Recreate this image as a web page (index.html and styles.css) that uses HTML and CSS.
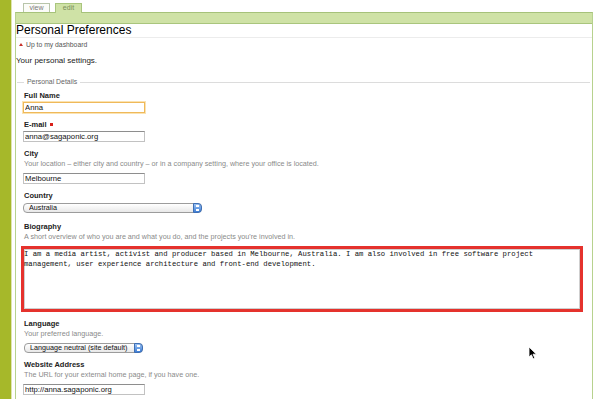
FILE: index.html
```html
<!DOCTYPE html>
<html lang="en">
<head>
    <meta charset="UTF-8">
    <meta name="viewport" content="width=device-width, initial-scale=1.0">
    <title>Personal Preferences</title>
    <link rel="stylesheet" href="styles.css">
</head>
<body>

<div class="page">
    <div class="rail"></div>

    <div class="main">
        <ul class="tabs">
            <li class="tab">view</li>
            <li class="tab active">edit</li>
        </ul>

        <div class="panel">
            <div class="panelBar"></div>

            <h1 class="title">Personal Preferences</h1>
            <a class="upLink" href="#"><span class="upArrow"></span>Up to my dashboard</a>
            <p class="intro">Your personal settings.</p>

            <form action="#" id="prefsForm">
                <fieldset class="details">
                    <legend>Personal Details</legend>

                    <div class="field">
                        <label for="fullname">Full Name</label>
                        <input type="text" id="fullname" class="text focused" value="Anna">
                    </div>

                    <div class="field">
                        <label for="email">E-mail <span class="required"></span></label>
                        <input type="text" id="email" class="text" value="anna@sagaponic.org">
                    </div>

                    <div class="field">
                        <label for="city">City</label>
                        <p class="help">Your location – either city and country – or in a company setting, where your office is located.</p>
                        <input type="text" id="city" class="text" value="Melbourne">
                    </div>

                    <div class="field">
                        <label for="country">Country</label>
                        <span class="selectBox wide">
                            <select id="country"><option>Australia</option></select>
                        </span>
                    </div>

                    <div class="field bioField">
                        <label for="bio">Biography</label>
                        <p class="help">A short overview of who you are and what you do, and the projects you're involved in.</p>
                        <textarea id="bio" class="bio">I am a media artist, activist and producer based in Melbourne, Australia. I am also involved in free software project management, user experience architecture and front-end development.</textarea>
                    </div>

                    <div class="field">
                        <label for="language">Language</label>
                        <p class="help">Your preferred language.</p>
                        <span class="selectBox">
                            <select id="language"><option>Language neutral (site default)</option></select>
                        </span>
                    </div>

                    <div class="field">
                        <label for="website">Website Address</label>
                        <p class="help">The URL for your external home page, if you have one.</p>
                        <input type="text" id="website" class="text" value="http://anna.sagaponic.org">
                    </div>
                </fieldset>
            </form>
        </div>
    </div>

    <svg class="pointer" width="10" height="14" viewBox="0 0 10 14">
        <path d="M1 1 L1 11 L3.4 8.8 L5.2 12.8 L6.8 12.1 L5 8.2 L8.4 8.2 Z" fill="#000" stroke="#fff" stroke-width="0.8"/>
    </svg>
</div>

</body>
</html>
```

FILE: styles.css
```css
body {
    margin: 0;
    padding: 0;
    background-color: #fff;
    font-family: "Liberation Sans", Arial, sans-serif;
    color: #222;
}
.page {
    display: flex;
    height: 399px;
    overflow: hidden;
    position: relative;
}
.rail {
    width: 11px;
    flex: none;
    background-color: #a6b82a;
    border-right: 1px solid #dfe5b0;
}
.main {
    flex: 1;
    margin-left: 3px;
    margin-right: 7px;
    padding-top: 3px;
}

/* Tabs on top of the green bar */
.tabs {
    list-style: none;
    margin: 0 0 0 8px;
    padding: 0;
    display: flex;
    gap: 5px;
    height: 9px;
}
.tab {
    width: 27px;
    height: 9px;
    box-sizing: border-box;
    border: 1px solid #b8c5aa;
    border-bottom: none;
    background-color: #fbfcf8;
    color: #7a7a7a;
    font-size: 7px;
    line-height: 8px;
    text-align: center;
}
.tab.active {
    height: 10px;
    background-color: #cfe2a6;
    border-color: #a9c57d;
    color: #7b8f5c;
    position: relative;
    z-index: 1;
}

.panel {
    border: 1px solid #b7d28e;
    border-top-color: #a6c27a;
    border-bottom: none;
    height: 400px;
}
.panelBar {
    height: 10px;
    background-color: #cfe2a6;
    border-bottom: 1px solid #a9c57d;
}

.title {
    margin: 0;
    padding-bottom: 1px;
    font-size: 12px;
    line-height: 12px;
    font-weight: normal;
    color: #000;
    border-bottom: 1px solid #ececec;
}
.upLink {
    display: block;
    margin-top: 2px;
    padding-left: 3px;
    font-size: 6.8px;
    line-height: 10px;
    color: #555;
    text-decoration: none;
}
.upArrow {
    display: inline-block;
    width: 0;
    height: 0;
    border-left: 2px solid transparent;
    border-right: 2px solid transparent;
    border-bottom: 3px solid #c8312b;
    margin-right: 3px;
    vertical-align: 1px;
}
.intro {
    margin: 6px 0 0 0;
    font-size: 8px;
    line-height: 10px;
    color: #222;
}

/* Personal details */
.details {
    margin: 12px 2px 0 1px;
    padding: 5px 0 0 7px;
    border: none;
    border-top: 1px solid #dcdcdc;
    min-width: 0;
}
.details legend {
    padding: 0 3px;
    font-size: 6.9px;
    line-height: 8px;
    color: #666;
}
.field {
    margin-bottom: 7px;
}
.field label {
    display: block;
    font-size: 7.5px;
    line-height: 10px;
    font-weight: bold;
    color: #222;
}
.required {
    display: inline-block;
    width: 3px;
    height: 3px;
    background-color: #d8201a;
    vertical-align: 1px;
    margin-left: 1px;
}
.help {
    margin: 0 0 4px 0;
    font-size: 7.2px;
    line-height: 10px;
    color: #8a8a8a;
}
.text {
    display: block;
    width: 122px;
    height: 11px;
    box-sizing: border-box;
    margin: 1px 0 0 -1px;
    padding: 0 1px;
    border: 1px solid #c2c2c2;
    border-top-color: #8e8e8e;
    font-family: "Liberation Sans", Arial, sans-serif;
    font-size: 7.7px;
    color: #111;
    background-color: #fff;
}
.help + .text {
    margin-top: 0;
}
.text.focused {
    border-color: #efb95a;
    box-shadow: 0 0 0 1px #fbe3b2;
}

/* Mac-like popup buttons */
.selectBox {
    display: block;
    position: relative;
    width: 119px;
    height: 10px;
    margin-top: 2px;
}
.help + .selectBox {
    margin-top: 0;
}
.selectBox.wide {
    width: 179px;
    margin-left: -1px;
}
.selectBox select {
    display: block;
    appearance: none;
    -webkit-appearance: none;
    width: 100%;
    height: 10px;
    box-sizing: border-box;
    margin: 0;
    padding: 0 0 0 5px;
    border: 1px solid #9c9c9c;
    border-radius: 4px;
    background: linear-gradient(#ffffff, #e8e8e8);
    font-family: "Liberation Sans", Arial, sans-serif;
    font-size: 7.2px;
    line-height: 8px;
    color: #111;
}
.selectBox::after {
    content: "";
    position: absolute;
    right: 0;
    top: 0;
    width: 9px;
    height: 10px;
    box-sizing: border-box;
    border: 1px solid #3d6fb6;
    border-radius: 0 4px 4px 0;
    background: linear-gradient(#9cc2f2, #3f7fd6);
}
.selectBox::before {
    content: "";
    position: absolute;
    right: 3px;
    top: 2px;
    width: 3px;
    height: 6px;
    z-index: 1;
    background:
        linear-gradient(#fff, #fff) 0 0 / 3px 2px no-repeat,
        linear-gradient(#fff, #fff) 0 4px / 3px 2px no-repeat;
}

.bio {
    display: block;
    width: 562px;
    height: 66px;
    box-sizing: border-box;
    margin: 2px 0 0 -3px;
    padding: 0 2px 0 0;
    border: 3px solid #e5322d;
    box-shadow: inset 0 0 0 1px #cfcfcf;
    resize: none;
    overflow: hidden;
    font-family: "Liberation Mono", "Courier New", monospace;
    font-size: 7.25px;
    line-height: 10px;
    color: #111;
}
.help + .bio {
    margin-top: 2px;
}
.bioField {
    margin-top: 9px;
}

.pointer {
    position: absolute;
    left: 528px;
    top: 346px;
}
```
